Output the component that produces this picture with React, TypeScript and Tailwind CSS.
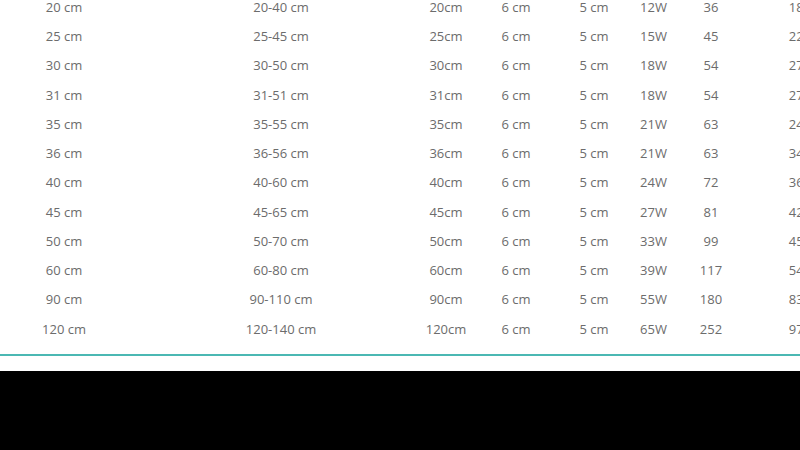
import React from 'react';

type Row = [string, string, string, string, string, string, string, string];

const rows: Row[] = [
  ['20 cm', '20-40 cm', '20cm', '6 cm', '5 cm', '12W', '36', '180'],
  ['25 cm', '25-45 cm', '25cm', '6 cm', '5 cm', '15W', '45', '225'],
  ['30 cm', '30-50 cm', '30cm', '6 cm', '5 cm', '18W', '54', '270'],
  ['31 cm', '31-51 cm', '31cm', '6 cm', '5 cm', '18W', '54', '279'],
  ['35 cm', '35-55 cm', '35cm', '6 cm', '5 cm', '21W', '63', '245'],
  ['36 cm', '36-56 cm', '36cm', '6 cm', '5 cm', '21W', '63', '340'],
  ['40 cm', '40-60 cm', '40cm', '6 cm', '5 cm', '24W', '72', '360'],
  ['45 cm', '45-65 cm', '45cm', '6 cm', '5 cm', '27W', '81', '420'],
  ['50 cm', '50-70 cm', '50cm', '6 cm', '5 cm', '33W', '99', '450'],
  ['60 cm', '60-80 cm', '60cm', '6 cm', '5 cm', '39W', '117', '540'],
  ['90 cm', '90-110 cm', '90cm', '6 cm', '5 cm', '55W', '180', '830'],
  ['120 cm', '120-140 cm', '120cm', '6 cm', '5 cm', '65W', '252', '970'],
];

const SizeTable: React.FC = () => {
  return (
    <div className="-ml-[20px] -mt-[7px] w-[871px]">
      {rows.map((row, i) => (
        <div
          key={i}
          className="grid h-[29.25px] grid-cols-[168px_266px_64px_76px_80px_39px_76px_102px] items-center text-[13px] text-[#6c6c6c]"
        >
          {row.map((cell, j) => (
            <div key={j} className="whitespace-nowrap text-center">
              {cell}
            </div>
          ))}
        </div>
      ))}
    </div>
  );
};

export default function App() {
  return (
    <div
      className="flex h-[450px] w-[800px] flex-col overflow-hidden bg-black"
      style={{ fontFamily: '"Open Sans", "Liberation Sans", sans-serif' }}
    >
      <div className="h-[371px] shrink-0 overflow-hidden bg-white">
        <SizeTable />
        <div className="mt-[10px] h-[2px] w-full bg-[#4bb8b3]" />
      </div>
    </div>
  );
}
